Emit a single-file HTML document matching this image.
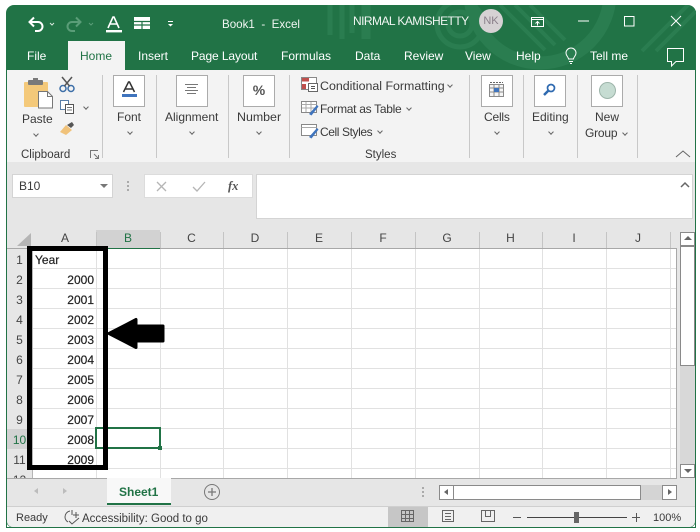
<!DOCTYPE html>
<html><head><meta charset="utf-8">
<style>
html,body{margin:0;padding:0;background:#fff;width:700px;height:532px;overflow:hidden}
body{position:relative;font-family:"Liberation Sans",sans-serif;color:#333}
.a{position:absolute}
.t{position:absolute;white-space:nowrap;font-family:"Liberation Sans",sans-serif;font-size:12px;line-height:16px;color:#3a3a3a}
.tb{position:absolute;white-space:nowrap;font-family:"Liberation Sans",sans-serif;font-size:12px;line-height:16px;color:#fff;top:48px}
.c{text-align:center}
.box{position:absolute;top:75px;width:30px;height:30px;background:#fff;border:1px solid #ababab}
.sep{position:absolute;top:75px;width:1px;height:83px;background:#c8c8c8}
.chev{position:absolute;width:3px;height:3px;border-right:1px solid #666;border-bottom:1px solid #666;transform:rotate(45deg)}
.hc{position:absolute;top:230px;height:17px;line-height:17px;text-align:center;font-size:12px;color:#444}
.rn{position:absolute;left:7px;width:25px;height:20px;line-height:22px;text-align:center;font-size:12px;color:#444}
.cell{position:absolute;left:33px;width:61px;text-align:right;height:20px;line-height:22px;font-size:12px;color:#222;-webkit-text-stroke:.2px #222}
</style></head>
<body>
<!-- window -->
<div class="a" style="left:6px;top:5px;width:690px;height:523px;background:#217346;border-radius:8px"></div>
<div class="a" style="left:7px;top:70px;width:688px;height:457px;background:#e6e6e6;border-radius:0 0 6px 6px;overflow:hidden">
  <div class="a" style="left:0;top:0;width:688px;height:92px;background:#f3f3f3"></div>
</div>
<!-- title decoration -->
<svg class="a" style="left:230px;top:5px" width="466" height="65" fill="none">
  <g stroke="#2a7d50">
    <path d="M100 0v30M112 0v34M122 0v28" stroke-width="5"/>
    <path d="M136 0v34" stroke-width="9"/>
    <circle cx="230" cy="19" r="23" stroke-width="5"/>
    <circle cx="230" cy="19" r="12" stroke-width="5"/>
    <circle cx="310" cy="-12" r="70" stroke-width="13"/>
  </g>
  <g stroke="#2a7d50" stroke-width="4">
    <path d="M270 0l45 45M285 0l40 40M300 0l35 35M412 46L458 0M426 46L466 6"/>
  </g>
</svg>
<!-- QAT -->
<svg class="a" style="left:26px;top:14px" width="160" height="20" fill="none">
  <path d="M4 8h8a4.500 4.500 0 0 1 0 9H9" stroke="#fff" stroke-width="2"/>
  <path d="M8 3.500L3.500 8l4.500 4.500" stroke="#fff" stroke-width="2"/>
  <path d="M24 9l2 2 2-2" stroke="#d8e8de" stroke-width="1"/>
  <path d="M54 8H46a4.500 4.500 0 0 0 0 9h3" stroke="#5a9d78" stroke-width="2"/>
  <path d="M50 3.500L54.500 8 50 12.500" stroke="#5a9d78" stroke-width="2"/>
  <path d="M63 9l2 2 2-2" stroke="#5a9d78" stroke-width="1"/>
  <path d="M82 14L87 3h1l5 11M84 10h7" stroke="#fff" stroke-width="1.600"/>
  <rect x="80" y="16" width="16" height="2.400" fill="#fff"/>
  <rect x="108" y="3" width="16" height="12" fill="#fff"/>
  <path d="M108 7.500h16M108 11h16M116 7.500v7.500" stroke="#217346" stroke-width="1.200"/>
  <path d="M142 7.500h5" stroke="#fff" stroke-width="1"/>
  <path d="M142 10l2.500 2.500L147 10z" fill="#fff"/>
</svg>
<div class="t" style="left:222px;top:17px;color:#f0f5f2;font-size:11.600px">Book1 &nbsp;-&nbsp; Excel</div>
<div class="t" style="left:353px;top:13px;color:#f0f5f2;font-size:12px;letter-spacing:-.55px">NIRMAL KAMISHETTY</div>
<div class="a" style="left:479px;top:9px;width:24px;height:24px;border-radius:50%;background:#d6d2d4;color:#8a7f8a;font:11px/24px 'Liberation Sans',sans-serif;text-align:center">NK</div>
<!-- window controls -->
<svg class="a" style="left:525px;top:10px" width="171" height="60" fill="none" stroke="#fff">
  <rect x="6.500" y="7.500" width="12" height="9"/>
  <path d="M6 9.500h13"/>
  <path d="M12.500 15.500v-4M10.500 13.500l2-2 2 2"/>
  <path d="M53 11h11"/>
  <rect x="99.500" y="6.500" width="9.500" height="9.500"/>
  <path d="M146 6l10 10M156 6l-10 10"/>
  <path d="M142.500 38.500v13h4v4.500l4.500-4.500h7.500v-13z"/>
</svg>
<!-- tabs -->
<div class="a" style="left:68px;top:41px;width:57px;height:30px;background:#f3f3f3"></div>
<div class="tb" style="left:27px">File</div>
<div class="tb" style="left:80px;color:#217346">Home</div>
<div class="tb" style="left:138px">Insert</div>
<div class="tb" style="left:191px;letter-spacing:-.1px">Page Layout</div>
<div class="tb" style="left:281px">Formulas</div>
<div class="tb" style="left:355px">Data</div>
<div class="tb" style="left:404px">Review</div>
<div class="tb" style="left:465px">View</div>
<div class="tb" style="left:516px">Help</div>
<svg class="a" style="left:563px;top:46px" width="16" height="20" fill="none" stroke="#fff"><path d="M5.500 13c0-2-2.500-3-2.500-6a5 5 0 0 1 10 0c0 3-2.500 4-2.500 6zM6 15.500h4M7 17.500h2"/></svg>
<div class="tb" style="left:590px">Tell me</div>
<!-- Clipboard -->
<svg class="a" style="left:22px;top:76px" width="70" height="64" fill="none">
  <rect x="2" y="6" width="24" height="25" rx="1" fill="#f4c97a"/>
  <rect x="6" y="4" width="15" height="5" rx="1" fill="#7a7a7a"/>
  <rect x="11" y="2" width="5" height="3" fill="#7a7a7a"/>
  <path d="M16.500 15.500h9l5 5v11.500h-14z" fill="#fff" stroke="#777"/>
  <path d="M25.500 15.500v5h5" stroke="#777"/>
  <circle cx="41" cy="12.500" r="3" stroke="#3d6fa8" stroke-width="1.500"/>
  <circle cx="49" cy="12.500" r="3" stroke="#3d6fa8" stroke-width="1.500"/>
  <path d="M42.500 10L50 1M47.500 10L40 1" stroke="#555" stroke-width="1.500"/>
  <rect x="38.500" y="24.500" width="8" height="9" fill="#fff" stroke="#5a7fa8"/>
  <rect x="43.500" y="28.500" width="8" height="9" fill="#fff" stroke="#555"/>
  <path d="M45 31.500h5M45 34h5" stroke="#777"/>
  <path d="M38 56l6-7 6 5-6 5z" fill="#f0c27a"/>
  <path d="M45 49l5-3 2 3-3 3z" fill="#555"/>
</svg>
<div class="chev" style="left:84px;top:105px"></div>
<div class="t" style="left:22px;top:111px">Paste</div>
<div class="chev" style="left:34px;top:132px"></div>
<div class="t" style="left:21px;top:147px;font-size:11.500px">Clipboard</div>
<svg class="a" style="left:90px;top:150px" width="10" height="10" fill="none" stroke="#777"><path d="M.5 8V.5H8M4 4l4.500 4.500M8.500 5v3.500H5"/></svg>
<div class="sep" style="left:102px"></div>
<!-- Font -->
<div class="box" style="left:113px"></div>
<svg class="a" style="left:120px;top:81px" width="18" height="18" fill="none"><path d="M3.500 11L8.500 1h1l5 10M5.500 8h7" stroke="#333" stroke-width="1.500"/><rect x="2" y="13" width="15" height="3" fill="#3f74bd"/></svg>
<div class="t" style="left:117px;top:109px">Font</div>
<div class="chev" style="left:128px;top:130px"></div>
<div class="sep" style="left:156px"></div>
<!-- Alignment -->
<div class="box" style="left:176px"></div>
<svg class="a" style="left:183px;top:83px" width="18" height="14" stroke="#777"><path d="M2 1.500h13M4 4.500h9M2 7.500h13M4 10.500h9"/></svg>
<div class="t" style="left:165px;top:109px">Alignment</div>
<div class="chev" style="left:190px;top:130px"></div>
<div class="sep" style="left:228px"></div>
<!-- Number -->
<div class="box" style="left:243px"></div>
<div class="t c" style="left:243px;top:82px;width:32px;font-size:14px;font-weight:bold;color:#555">%</div>
<div class="t" style="left:237px;top:109px;font-size:12.400px">Number</div>
<div class="chev" style="left:257px;top:130px"></div>
<div class="sep" style="left:289px"></div>
<!-- Styles -->
<svg class="a" style="left:300px;top:76px" width="20" height="66" fill="none">
  <rect x="1.500" y="1.500" width="15" height="12" fill="#fff" stroke="#888"/>
  <rect x="2" y="2" width="7" height="3.500" fill="#c0504d"/>
  <rect x="2" y="8" width="4" height="5" fill="#c0504d"/>
  <rect x="8.500" y="7.500" width="9" height="8" fill="#fff" stroke="#666"/>
  <path d="M11 10.500h4M11 12.500h4" stroke="#555"/>
  <rect x="1.500" y="25.500" width="15" height="11" fill="#fff" stroke="#888"/>
  <path d="M1.500 28.500h15M6 26v10M11 26v10M2 32h14" stroke="#aaa"/>
  <path d="M9 38l8-9 1.500 1.500-7 9z" fill="#3f74bd"/>
  <rect x="1.500" y="48.500" width="15" height="11" fill="#fff" stroke="#888"/>
  <path d="M1.500 51.500h15" stroke="#aaa"/>
  <path d="M9 61l8-9 1.500 1.500-7 9z" fill="#3f74bd"/>
</svg>
<div class="t" style="left:320px;top:78px;font-size:12.400px">Conditional Formatting</div>
<div class="chev" style="left:448px;top:83px"></div>
<div class="t" style="left:320px;top:101px;letter-spacing:-.3px">Format as Table</div>
<div class="chev" style="left:407px;top:106px"></div>
<div class="t" style="left:320px;top:124px;letter-spacing:-.4px">Cell Styles</div>
<div class="chev" style="left:378px;top:129px"></div>
<div class="t" style="left:365px;top:147px;font-size:11.500px">Styles</div>
<div class="sep" style="left:469px"></div>
<!-- Cells -->
<div class="box" style="left:481px"></div>
<svg class="a" style="left:488px;top:81px" width="18" height="18" fill="none" stroke="#8a8a8a"><rect x="1.500" y="3.500" width="14" height="12" fill="#f5f5f5"/><path d="M1.500 7h14M1.500 11h14M6 3.500v12M11 3.500v12"/><rect x="6" y="7" width="5" height="4" fill="#3f74bd" stroke="none"/><path d="M2 1.500h13" stroke="#666" stroke-dasharray="2 1"/></svg>
<div class="t" style="left:484px;top:109px;letter-spacing:-.2px">Cells</div>
<div class="chev" style="left:495px;top:130px"></div>
<div class="sep" style="left:523px"></div>
<!-- Editing -->
<div class="box" style="left:534px"></div>
<svg class="a" style="left:541px;top:82px" width="18" height="18" fill="none"><circle cx="10" cy="6" r="3.500" stroke="#2f6ab0" stroke-width="1.700"/><path d="M7.500 8.500L3 13" stroke="#2f6ab0" stroke-width="2.500"/></svg>
<div class="t" style="left:532px;top:109px">Editing</div>
<div class="chev" style="left:549px;top:130px"></div>
<div class="sep" style="left:577px"></div>
<!-- New Group -->
<div class="box" style="left:591px"></div>
<div class="a" style="left:599px;top:82px;width:15px;height:15px;border-radius:50%;background:#c6dcd2;border:1px solid #9db5aa"></div>
<div class="t c" style="left:585px;top:109px;width:44px">New</div>
<div class="t" style="left:585px;top:125px;letter-spacing:-.2px">Group</div>
<div class="chev" style="left:623px;top:131px"></div>
<div class="sep" style="left:637px"></div>
<svg class="a" style="left:674px;top:148px" width="18" height="12" fill="none" stroke="#666"><path d="M2 9l7-6 7 6"/></svg>
<!-- Formula bar -->
<div class="a" style="left:12px;top:174px;width:101px;height:24px;background:#fff;border:1px solid #d4d4d4;box-sizing:border-box"></div>
<div class="t" style="left:19px;top:178px">B10</div>
<div class="a" style="left:100px;top:184px;border:4px solid transparent;border-top:4px solid #777"></div>
<div class="a" style="left:127px;top:181px;width:2px;height:2px;background:#aaa;box-shadow:0 4px #aaa,0 8px #aaa"></div>
<div class="a" style="left:144px;top:174px;width:109px;height:24px;background:#fff;border:1px solid #dcdcdc;box-sizing:border-box"></div>
<svg class="a" style="left:155px;top:180px" width="60" height="14" fill="none" stroke="#b5b5b5" stroke-width="1.300"><path d="M2 2l9 9M11 2l-9 9M38 7l4 4 8-9"/></svg>
<div class="t" style="left:228px;top:178px;font-family:'Liberation Serif',serif;font-style:italic;font-size:12.500px;color:#555;font-weight:bold">fx</div>
<div class="a" style="left:256px;top:174px;width:437px;height:45px;background:#fff;border:1px solid #d4d4d4;box-sizing:border-box"></div>
<svg class="a" style="left:680px;top:181px" width="10" height="8" fill="none" stroke="#666" stroke-width="1.500"><path d="M1 6l4-4 4 4"/></svg>
<!-- Grid -->
<div class="a" style="left:32px;top:248px;width:645px;height:230px;background:#fff"></div>
<svg class="a" style="left:7px;top:230px" width="671" height="249" shape-rendering="crispEdges">
  <rect x="0" y="0" width="671" height="18" fill="#e6e6e6"/>
  <rect x="89" y="0" width="64" height="18" fill="#d2d2d2"/>
  <rect x="0" y="199" width="25" height="20" fill="#d2d2d2"/>
  <path d="M24 3v13H10z" fill="#b5b5b5" shape-rendering="auto"/>
  <g stroke="#e1e1e1" fill="none">
    <path d="M25 38.500h645M25 58.500h645M25 78.500h645M25 98.500h645M25 118.500h645M25 138.500h645M25 158.500h645M25 178.500h645M25 198.500h645M25 218.500h645M25 238.500h645"/>
    <path d="M89.500 18v230M153.500 18v230M216.500 18v230M280.500 18v230M344.500 18v230M408.500 18v230M472.500 18v230M535.500 18v230M599.500 18v230M663.500 18v230"/>
  </g>
  <g stroke="#c4c4c4"><path d="M89.500 2v16M153.500 2v16M216.500 2v16M280.500 2v16M344.500 2v16M408.500 2v16M472.500 2v16M535.500 2v16M599.500 2v16M663.500 2v16"/></g>
  <path d="M0 18.500h670" stroke="#a8a8a8"/>
  <path d="M89 18.500h64" stroke="#217346"/>
  <path d="M25.500 18v230" stroke="#b5b5b5"/>
  <path d="M669.500 18v230" stroke="#a8a8a8"/>
</svg>
<div class="hc" style="left:33px;width:64px">A</div>
<div class="hc" style="left:96px;width:64px;color:#217346">B</div>
<div class="hc" style="left:160px;width:63px">C</div>
<div class="hc" style="left:223px;width:64px">D</div>
<div class="hc" style="left:287px;width:64px">E</div>
<div class="hc" style="left:351px;width:64px">F</div>
<div class="hc" style="left:415px;width:64px">G</div>
<div class="hc" style="left:479px;width:63px">H</div>
<div class="hc" style="left:542px;width:64px">I</div>
<div class="hc" style="left:606px;width:64px">J</div>
<div class="rn" style="top:249px">1</div><div class="rn" style="top:269px">2</div><div class="rn" style="top:289px">3</div><div class="rn" style="top:309px">4</div><div class="rn" style="top:329px">5</div><div class="rn" style="top:349px">6</div><div class="rn" style="top:369px">7</div><div class="rn" style="top:389px">8</div><div class="rn" style="top:409px">9</div><div class="rn" style="top:429px;color:#217346">10</div><div class="rn" style="top:449px">11</div><div class="rn" style="top:469px">12</div>
<div class="cell" style="top:249px;text-align:left;left:35px">Year</div>
<div class="cell" style="top:269px">2000</div><div class="cell" style="top:289px">2001</div><div class="cell" style="top:309px">2002</div><div class="cell" style="top:329px">2003</div><div class="cell" style="top:349px">2004</div><div class="cell" style="top:369px">2005</div><div class="cell" style="top:389px">2006</div><div class="cell" style="top:409px">2007</div><div class="cell" style="top:429px">2008</div><div class="cell" style="top:449px">2009</div>
<!-- selection -->
<div class="a" style="left:95px;top:427px;width:66px;height:22px;border:2px solid #217346;box-sizing:border-box"></div>
<div class="a" style="left:158px;top:446px;width:4px;height:4px;background:#217346"></div>
<!-- black box + arrow -->
<div class="a" style="left:27px;top:246px;width:81px;height:224px;border:5px solid #000;box-sizing:border-box"></div>
<svg class="a" style="left:100px;top:312px" width="70" height="44"><path d="M9 21.500L36 7.500V14H63V29H36V35.500Z" fill="#000" stroke="#000" stroke-width="3" stroke-linejoin="round"/></svg>
<!-- v scrollbar -->
<div class="a" style="left:677px;top:230px;width:18px;height:248px;background:#e6e6e6"></div>
<div class="a" style="left:680px;top:246px;width:15px;height:218px;background:#d8d8d8"></div>
<div class="a" style="left:680px;top:232px;width:15px;height:14px;background:#fff;border:1px solid #8a8a8a;box-sizing:border-box"></div>
<div class="a" style="left:684px;top:236px;border:4px solid transparent;border-bottom:4px solid #666;border-top:0"></div>
<div class="a" style="left:680px;top:246px;width:15px;height:120px;background:#fff;border:1px solid #8a8a8a;box-sizing:border-box"></div>
<div class="a" style="left:680px;top:464px;width:15px;height:14px;background:#fff;border:1px solid #8a8a8a;box-sizing:border-box"></div>
<div class="a" style="left:684px;top:469px;border:4px solid transparent;border-top:4px solid #666;border-bottom:0"></div>
<!-- tab bar -->
<div class="a" style="left:7px;top:478px;width:670px;height:1px;background:#a8a8a8"></div>
<div class="a" style="left:7px;top:479px;width:688px;height:27px;background:#e6e6e6"></div>
<div class="a" style="left:107px;top:478px;width:64px;height:25px;background:#f8f8f8;border-bottom:2px solid #217346"></div>
<div class="t" style="left:119px;top:484px;color:#217346;font-weight:bold">Sheet1</div>
<div class="a" style="left:34px;top:488px;border:3.500px solid transparent;border-right:4px solid #bcbcbc;border-left:0"></div>
<div class="a" style="left:63px;top:488px;border:3.500px solid transparent;border-left:4px solid #bcbcbc;border-right:0"></div>
<svg class="a" style="left:203px;top:483px" width="18" height="18" fill="none" stroke="#777"><circle cx="9" cy="9" r="7.500"/><path d="M5 9h8M9 5v8" stroke-width="1.300"/></svg>
<div class="a" style="left:422px;top:487px;width:2px;height:2px;background:#aaa;box-shadow:0 4px #aaa,0 8px #aaa"></div>
<div class="a" style="left:439px;top:485px;width:238px;height:15px;background:#d4d4d4"></div>
<div class="a" style="left:439px;top:485px;width:15px;height:15px;background:#fff;border:1px solid #8a8a8a;box-sizing:border-box"></div>
<div class="a" style="left:444px;top:489px;border:3.500px solid transparent;border-right:4px solid #666;border-left:0"></div>
<div class="a" style="left:453px;top:485px;width:188px;height:15px;background:#fff;border:1px solid #8a8a8a;box-sizing:border-box"></div>
<div class="a" style="left:662px;top:485px;width:15px;height:15px;background:#fff;border:1px solid #8a8a8a;box-sizing:border-box"></div>
<div class="a" style="left:668px;top:489px;border:3.500px solid transparent;border-left:4px solid #666;border-right:0"></div>
<!-- status -->
<div class="a" style="left:7px;top:506px;width:688px;height:1px;background:#cfcfcf"></div>
<div class="a" style="left:7px;top:507px;width:688px;height:20px;background:#f0f0f0;border-radius:0 0 6px 6px"></div>
<div class="t" style="left:16px;top:510px;font-size:11px">Ready</div>
<svg class="a" style="left:63px;top:509px" width="18" height="18" fill="none" stroke="#555"><path d="M7 2a6 6 0 0 0-5 6 6 6 0 0 0 3 5M9 1v5"/><path d="M13 3v6M10 6h6M6 12l3 3 7-6"/></svg>
<div class="t" style="left:82px;top:511px;font-size:11.500px">Accessibility: Good to go</div>
<div class="a" style="left:388px;top:507px;width:40px;height:20px;background:#c6c6c6"></div>
<svg class="a" style="left:400px;top:509px" width="100" height="16" fill="none" stroke="#666" shape-rendering="crispEdges">
  <rect x="1.500" y="1.500" width="12" height="11"/><path d="M5.500 1v12M9.500 1v12M1 5.500h13M1 9.500h13"/>
  <rect x="42.500" y="1.500" width="11" height="11"/><path d="M45 4.500h6M45 7.500h6M45 10.500h6"/>
  <path d="M81.500 1.500h13v11h-13zM85.500 1.500v6h5v-6"/>
</svg>
<div class="a" style="left:513px;top:517px;width:8px;height:1px;background:#555"></div>
<div class="a" style="left:527px;top:517px;width:100px;height:1px;background:#444"></div>
<div class="a" style="left:574px;top:512px;width:5px;height:11px;background:#666"></div>
<div class="a" style="left:632px;top:517px;width:8px;height:1px;background:#555"></div>
<div class="a" style="left:635.500px;top:513px;width:1px;height:9px;background:#555"></div>
<div class="t" style="left:653px;top:510px;font-size:11px">100%</div>
<!-- window edge -->
<div class="a" style="left:6px;top:70px;width:1px;height:458px;background:#217346"></div>
<div class="a" style="left:695px;top:70px;width:1px;height:458px;background:#217346"></div>
<div class="a" style="left:6px;top:527px;width:690px;height:1px;background:#217346"></div>
</body></html>
